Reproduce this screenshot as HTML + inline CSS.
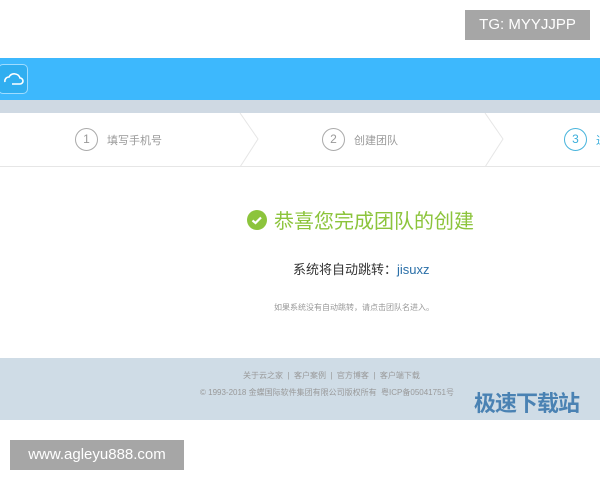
<!DOCTYPE html>
<html><head><meta charset="utf-8"><style>
body{margin:0;width:600px;height:480px;background:#fff;position:relative;overflow:hidden;font-family:"Liberation Sans","Noto Sans CJK SC",sans-serif}
.a{position:absolute}
.step{position:absolute;top:128px;font-size:11px;color:#999;display:flex;align-items:center}
.c{width:21px;height:21px;border:1.5px solid #aaa;border-radius:50%;text-align:center;line-height:21px;font-size:12px;color:#999;margin-right:9px}
</style></head><body>
<div class="a" style="left:465px;top:10px;width:125px;height:30px;background:#a6a6a6;color:#fff;font-size:15px;line-height:30px;text-align:center">TG: MYYJJPP</div>
<div class="a" style="left:0;top:58px;width:600px;height:42px;background:#3db8fd"></div>
<div class="a" style="left:-2px;top:64px;width:28px;height:28px;border:1px solid #9fdcff;border-radius:5px;background:#30aef0">
<svg width="28" height="28" viewBox="0 0 28 28"><path d="M6 17 a4 4 0 0 1 4-5 a6 6 0 0 1 11 1 a3 3 0 0 1 0 6 h-8" fill="none" stroke="#fff" stroke-width="1.6"/></svg></div>
<div class="a" style="left:0;top:100px;width:600px;height:13px;background:#cfd9e3"></div>
<div class="a" style="left:0;top:113px;width:600px;height:53px;background:#fff;border-bottom:1px solid #e6e6e6"></div>
<svg class="a" style="left:0;top:113px" width="600" height="54"><path d="M240 0 L258 26 L240 54 M485 0 L503 26 L485 54" fill="none" stroke="#e6e6e6"/></svg>
<div class="step" style="left:75px"><div class="c">1</div>填写手机号</div>
<div class="step" style="left:322px"><div class="c">2</div>创建团队</div>
<div class="step" style="left:564px;color:#3aaedb"><div class="c" style="border-color:#48b4dc;color:#3aaedb">3</div>进</div>
<div class="a" style="left:247px;top:210px;width:20px;height:20px;border-radius:50%;background:#8cc43c"><svg width="20" height="20"><path d="M5.5 10.5 L8.5 13 L14 7.5" fill="none" stroke="#fff" stroke-width="2.2"/></svg></div>
<div class="a" style="left:274px;top:209px;font-size:20px;color:#8cc43c;line-height:27px">恭喜您完成团队的创建</div>
<div class="a" style="left:293px;top:259px;font-size:13px;color:#333">系统将自动跳转：<span style="color:#2a6fa8">jisuxz</span></div>
<div class="a" style="left:274px;top:302px;font-size:8px;color:#999">如果系统没有自动跳转，请点击团队名进入。</div>
<div class="a" style="left:0;top:358px;width:600px;height:62px;background:#cfdce6"></div>
<div class="a" style="left:243px;top:370px;font-size:8px;color:#999">关于云之家 &nbsp;| &nbsp;客户案例 &nbsp;| &nbsp;官方博客 &nbsp;| &nbsp;客户端下载</div>
<div class="a" style="left:200px;top:387px;font-size:8px;color:#999">© 1993-2018 金蝶国际软件集团有限公司版权所有 &nbsp;粤ICP备05041751号</div>
<div class="a" style="left:474px;top:386px;font-size:22px;color:#4a82b3;font-weight:bold;letter-spacing:-1px">极速下载站</div>
<div class="a" style="left:10px;top:440px;width:174px;height:30px;background:#a6a6a6;color:#fff;font-size:15px;line-height:30px;text-align:center">www.agleyu888.com</div>
</body></html>
